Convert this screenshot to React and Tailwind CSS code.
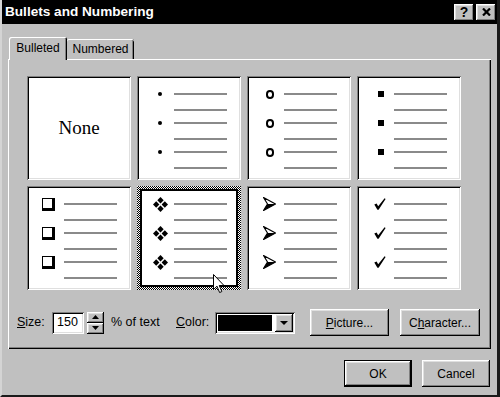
const raised =
  "shadow-[inset_-1px_-1px_#000,inset_1px_1px_#fff,inset_-2px_-2px_#808080,inset_2px_2px_#dfdfdf]";
const sunken =
  "shadow-[inset_1px_1px_#808080,inset_-1px_-1px_#fff,inset_2px_2px_#000,inset_-2px_-2px_#dfdfdf]";

const Dot = () => <div className="w-[4px] h-[4px] rounded-full bg-black" />;
const Ring = () => (
  <div className="w-[8px] h-[9px] rounded-full border-2 border-black" />
);
const Square = () => <div className="w-[6px] h-[6px] bg-black" />;
const ShadowBox = () => (
  <div className="w-[13px] h-[13px] bg-white border border-black border-r-[3px] border-b-[3px]" />
);
const Diamond = () => (
  <svg width="15" height="15" viewBox="0 0 15 15">
    <path d="M7.5 0 L10.7 3.2 L7.5 6.4 L4.3 3.2 Z" fill="#000" />
    <path d="M3.2 4.3 L6.4 7.5 L3.2 10.7 L0 7.5 Z" fill="#000" />
    <path d="M11.8 4.3 L15 7.5 L11.8 10.7 L8.6 7.5 Z" fill="#000" />
    <path d="M7.5 8.6 L10.7 11.8 L7.5 15 L4.3 11.8 Z" fill="#000" />
  </svg>
);
const Arrow = () => (
  <svg width="13" height="14" viewBox="0 0 13 14">
    <path d="M0.5 13.5 L12.5 7 L4.5 7 Z" fill="#000" />
    <path
      d="M0.5 0.5 L12.5 7 L0.5 13.5 L4.5 7 Z"
      fill="none"
      stroke="#000"
      strokeWidth="1.2"
      strokeLinejoin="round"
    />
  </svg>
);
const Check = () => (
  <svg width="12" height="12" viewBox="0 0 12 12">
    <path d="M0.3 6.6 L2.6 5.6 L4.2 8.2 L10.6 0.2 L11.6 0.9 L4.6 11.8 L3.4 11.8 Z" fill="#000" />
  </svg>
);

function Lines({ bullet, pad, sel }) {
  const rows = [true, false, true, false, true, false];
  const gaps = sel
    ? ["mt-[12px]", "mt-[14px]", "mt-[11px]", "mt-[14px]", "mt-[11px]", "mt-[14px]"]
    : ["mt-[17px]", "mt-[14px]", "mt-[11px]", "mt-[14px]", "mt-[11px]", "mt-[14px]"];
  return (
    <div className="flex flex-col">
      {rows.map((b, i) => (
        <div key={i} className={`flex items-center h-[2px] ${gaps[i]}`}>
          <div className={`flex items-center h-[2px] shrink-0 ${sel ? "w-[32px]" : "w-[37px]"} ${pad}`}>
            {b && bullet}
          </div>
          <div className="w-[53px] h-[2px] bg-[#8a8a8a]" />
        </div>
      ))}
    </div>
  );
}

function Tile({ children }) {
  return <div className={`bg-white ${sunken}`}>{children}</div>;
}

function Cursor() {
  return (
    <svg className="absolute left-[76px] top-[88px]" width="13" height="20" viewBox="0 0 13 20">
      <path
        d="M0.5 0.5 L0.5 15.5 L4 12.2 L6.6 18.5 L8.8 17.6 L6.3 11.5 L11 11.5 Z"
        fill="#fff"
        stroke="#000"
        strokeWidth="1"
        strokeLinejoin="round"
      />
    </svg>
  );
}

function Btn({ children, className = "" }) {
  return (
    <div
      className={`bg-[#c0c0c0] ${raised} flex items-center justify-center text-[12px] ${className}`}
    >
      {children}
    </div>
  );
}

export default function App() {
  return (
    <div className="w-[500px] h-[397px] bg-[#c0c0c0] flex flex-col overflow-hidden border-l-2 border-l-[#d4d4d4] border-r-[3px] border-r-[#1a1a1a] border-b-2 border-b-[#1a1a1a] font-['Liberation_Sans',Arial,sans-serif] text-black">
      <div className="h-[24px] bg-black flex items-center justify-between pl-[3px] pr-[1px] shrink-0">
        <span className="text-white font-bold text-[13.6px]">Bullets and Numbering</span>
        <div className="flex gap-[2px]">
          <div className={`w-[20px] h-[17px] bg-[#c0c0c0] ${raised} flex items-center justify-center font-bold text-[14px] leading-none`}>
            ?
          </div>
          <div className={`w-[20px] h-[17px] bg-[#c0c0c0] ${raised} flex items-center justify-center`}>
            <svg width="9" height="8" viewBox="0 0 9 8">
              <path d="M1 0.5 L8 7.5 M8 0.5 L1 7.5" stroke="#000" strokeWidth="2.2" />
            </svg>
          </div>
        </div>
      </div>

      <div className="flex flex-col px-[6px]">
        <div className="flex items-end mt-[13px] pl-[1px] relative z-10">
          <div className="h-[23px] -mb-[1px] w-[58px] bg-[#c0c0c0] rounded-t-[2px] shadow-[inset_1px_1px_#fff,inset_-1px_0_#000,inset_-2px_0_#808080] flex items-center justify-center text-[12px] pb-[2px]">
            Bulleted
          </div>
          <div className="h-[20px] w-[67px] bg-[#c0c0c0] rounded-t-[2px] shadow-[inset_0_1px_#fff,inset_-1px_0_#000,inset_-2px_0_#808080] flex items-center justify-center text-[12px]">
            Numbered
          </div>
        </div>

        <div className="h-[290px] flex flex-col pl-[9px] pt-[17px] shadow-[inset_1px_1px_#fff,inset_-1px_-1px_#000,inset_-2px_-2px_#808080]">
          <div className="ml-[10px] grid grid-cols-[repeat(4,104px)] auto-rows-[104px] gap-[6px]">
            <Tile>
              <div className="h-full flex items-center justify-center font-['Liberation_Serif',serif] text-[19px]">
                None
              </div>
            </Tile>
            <Tile>
              <Lines bullet={<Dot />} pad="pl-[21px]" />
            </Tile>
            <Tile>
              <Lines bullet={<Ring />} pad="pl-[19px]" />
            </Tile>
            <Tile>
              <Lines bullet={<Square />} pad="pl-[21px]" />
            </Tile>
            <Tile>
              <Lines bullet={<ShadowBox />} pad="pl-[15px]" />
            </Tile>
            <div className="relative bg-[image:repeating-conic-gradient(#000_0_25%,#fff_0_50%)] bg-[length:2px_2px] p-[3px]">
              <div className="h-full bg-white border-2 border-black">
                <Lines bullet={<Diamond />} pad="pl-[11px]" sel />
              </div>
              <Cursor />
            </div>
            <Tile>
              <Lines bullet={<Arrow />} pad="pl-[16px]" />
            </Tile>
            <Tile>
              <Lines bullet={<Check />} pad="pl-[17px]" />
            </Tile>
          </div>

          <div className="mt-[19px] h-[27px] flex items-center text-[12.5px]">
            <span className="w-[35px] shrink-0">
              <u>S</u>ize:
            </span>
            <div className={`w-[32px] h-[22px] bg-white ${sunken} flex items-center pl-[5px]`}>150</div>
            <div className="ml-[3px] w-[17px] h-[22px] flex flex-col">
              <div className={`h-[11px] bg-[#c0c0c0] ${raised} flex items-center justify-center`}>
                <svg width="7" height="4" viewBox="0 0 7 4">
                  <path d="M3.5 0 L7 4 L0 4 Z" fill="#000" />
                </svg>
              </div>
              <div className={`h-[11px] bg-[#c0c0c0] ${raised} flex items-center justify-center`}>
                <svg width="7" height="4" viewBox="0 0 7 4">
                  <path d="M0 0 L7 0 L3.5 4 Z" fill="#000" />
                </svg>
              </div>
            </div>
            <span className="ml-[7px] w-[65px] shrink-0">% of text</span>
            <span className="w-[39px] shrink-0">
              <u>C</u>olor:
            </span>
            <div className={`w-[80px] h-[22px] bg-white ${sunken} flex items-center p-[2px]`}>
              <div className="flex-1 h-[16px] bg-black mx-[1px]" />
              <div className={`w-[18px] h-[18px] ml-[2px] bg-[#c0c0c0] ${raised} flex items-center justify-center`}>
                <svg width="8" height="4" viewBox="0 0 8 4">
                  <path d="M0 0 L8 0 L4 4 Z" fill="#000" />
                </svg>
              </div>
            </div>
            <Btn className="ml-[15px] w-[79px] h-[27px]">
              <span>
                <u>P</u>icture...
              </span>
            </Btn>
            <Btn className="ml-[11px] w-[80px] h-[27px]">
              <span>
                C<u>h</u>aracter...
              </span>
            </Btn>
          </div>
        </div>

        <div className="flex justify-end gap-[10px] mt-[11px] pr-[1px]">
          <div className="w-[68px] h-[27px] border border-black">
            <Btn className="w-full h-full">OK</Btn>
          </div>
          <Btn className="w-[68px] h-[27px]">Cancel</Btn>
        </div>
      </div>
    </div>
  );
}
